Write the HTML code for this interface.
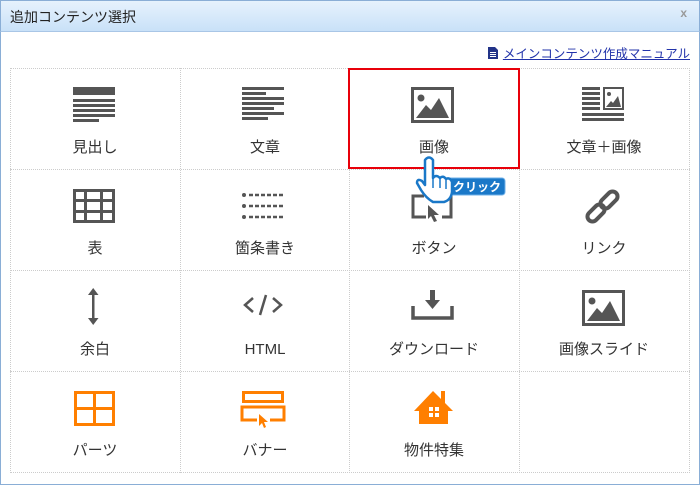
<!DOCTYPE html>
<html><head><meta charset="utf-8"><style>
*{margin:0;padding:0;box-sizing:border-box}
html,body{width:700px;height:485px;overflow:hidden;background:#fff;font-family:"Liberation Sans","Noto Sans CJK JP",sans-serif}
.frame{position:absolute;left:0;top:0;width:700px;height:485px;border:1px solid #8aaed6;border-top:none}
.title{position:absolute;left:0;top:0;width:700px;height:32px;background:linear-gradient(#e6f2fd,#c9e1f8);border:1px solid #8aaed6;border-bottom:1px solid #a9c6e6}
.title span{position:absolute;left:9px;top:6px;font-size:14px;color:#222}
.title b{position:absolute;right:12px;top:5px;font-size:12px;color:#999;font-weight:bold}
.link{position:absolute;right:10px;top:43px;font-size:12.5px;color:#2233aa;text-decoration:underline}
.lbl{position:absolute;width:170px;text-align:center;font-size:15px;line-height:20px;height:20px;color:#333}
</style></head><body>
<div class="frame"></div>
<div class="title"><span>追加コンテンツ選択</span><b>x</b></div>
<div class="link"><svg width="10" height="12" style="vertical-align:-1px;margin-right:5px"><path d="M0 0H7L10 3V12H0Z" fill="#223388"/><rect x="2" y="5" width="6" height="1" fill="#fff"/><rect x="2" y="7" width="6" height="1" fill="#fff"/><rect x="2" y="9" width="6" height="1" fill="#fff"/></svg>メインコンテンツ作成マニュアル</div>
<div style="position:absolute;left:10px;top:68px;width:680px;height:405px;border-top:1px dotted #ccc;border-left:1px dotted #ccc"></div>
<div style="position:absolute;left:180px;top:68px;height:405px;border-left:1px dotted #ccc"></div>
<div style="position:absolute;left:349px;top:68px;height:405px;border-left:1px dotted #ccc"></div>
<div style="position:absolute;left:519px;top:68px;height:405px;border-left:1px dotted #ccc"></div>
<div style="position:absolute;left:689px;top:68px;height:405px;border-left:1px dotted #ccc"></div>
<div style="position:absolute;left:10px;top:169px;width:680px;border-top:1px dotted #ccc"></div>
<div style="position:absolute;left:10px;top:270px;width:680px;border-top:1px dotted #ccc"></div>
<div style="position:absolute;left:10px;top:371px;width:680px;border-top:1px dotted #ccc"></div>
<div style="position:absolute;left:10px;top:472px;width:680px;border-top:1px dotted #ccc"></div>

<div class="lbl" style="left:10px;top:138px">見出し</div>
<div class="lbl" style="left:180px;top:138px">文章</div>
<div class="lbl" style="left:349px;top:138px">画像</div>
<div class="lbl" style="left:519px;top:138px">文章＋画像</div>
<div class="lbl" style="left:10px;top:239px">表</div>
<div class="lbl" style="left:180px;top:239px">箇条書き</div>
<div class="lbl" style="left:349px;top:239px">ボタン</div>
<div class="lbl" style="left:519px;top:239px">リンク</div>
<div class="lbl" style="left:10px;top:340px">余白</div>
<div class="lbl" style="left:180px;top:340px">HTML</div>
<div class="lbl" style="left:349px;top:340px">ダウンロード</div>
<div class="lbl" style="left:519px;top:340px">画像スライド</div>
<div class="lbl" style="left:10px;top:441px">パーツ</div>
<div class="lbl" style="left:180px;top:441px">バナー</div>
<div class="lbl" style="left:349px;top:441px">物件特集</div>

<div style="position:absolute;left:348px;top:68px;width:172px;height:101px;border:2px solid #e8000a"></div>

<svg width="700" height="485" style="position:absolute;left:0;top:0">
<g fill="#555">
<rect x="73" y="87" width="42" height="8"/><rect x="73" y="99" width="42" height="3"/><rect x="73" y="104" width="42" height="3"/><rect x="73" y="109" width="42" height="3"/><rect x="73" y="114" width="42" height="3"/><rect x="73" y="119" width="26" height="3"/>
<rect x="242" y="87" width="42" height="3"/><rect x="242" y="92" width="24" height="3"/><rect x="242" y="97" width="42" height="3"/><rect x="242" y="102" width="42" height="3"/><rect x="242" y="107" width="32" height="3"/><rect x="242" y="112" width="42" height="3"/><rect x="242" y="117" width="26" height="3"/>
<rect x="412.5" y="88.5" width="40" height="33" fill="none" stroke="#555" stroke-width="3"/><circle cx="421" cy="98" r="3.5"/><path d="M416 118L426 105L431 110L439 98L449 118Z"/>
<rect x="582" y="87" width="18" height="3"/><rect x="582" y="92" width="18" height="3"/><rect x="582" y="97" width="18" height="3"/><rect x="582" y="102" width="18" height="3"/><rect x="582" y="107" width="18" height="3"/>
<rect x="604" y="88" width="19" height="21" fill="none" stroke="#555" stroke-width="2"/><circle cx="609" cy="94" r="2"/><path d="M606 107L611 101L613 103L618 96L621 107Z"/>
<rect x="582" y="113" width="42" height="3"/><rect x="582" y="118" width="42" height="3"/>
<path d="M73 189H115V223H73Z M76 192V199H84V192Z M87 192V199H100V192Z M103 192V199H112V192Z M76 202V210H84V202Z M87 202V210H100V202Z M103 202V210H112V202Z M76 213V220H84V213Z M87 213V220H100V213Z M103 213V220H112V213Z" fill-rule="evenodd"/>
<g><circle cx="244" cy="195" r="2"/><circle cx="244" cy="206" r="2"/><circle cx="244" cy="217" r="2"/></g>
<g stroke="#555" stroke-width="2.5" stroke-dasharray="4 2"><line x1="249" y1="195" x2="285" y2="195"/><line x1="249" y1="206" x2="285" y2="206"/><line x1="249" y1="217" x2="285" y2="217"/></g>
<path d="M424 196H413V217H426 M440 196H451V217H442" fill="none" stroke="#555" stroke-width="3"/>
<path d="M428 205L428 219L431 216L434 222L437 221L434 215L439 215Z"/>
<g fill="none" stroke="#555" stroke-width="4"><rect x="586" y="208" width="20" height="10" rx="5" transform="rotate(-45 596 213)"/><rect x="599" y="195" width="20" height="10" rx="5" transform="rotate(-45 609 200)"/></g>
<rect x="92" y="293" width="2.5" height="27"/><path d="M88 295L93.2 288L98.5 295Z M88 318L93.2 325L98.5 318Z"/>
<g fill="none" stroke="#555" stroke-width="2.5"><path d="M253 298L245 305L253 312 M273 298L281 305L273 312 M266 295L260 315"/></g>
<rect x="430" y="290" width="5" height="12"/><path d="M425 300L432.5 309L440 300Z"/><path d="M413 306V318H452V306" fill="none" stroke="#555" stroke-width="3.5"/>
<rect x="583.5" y="291.5" width="40" height="33" fill="none" stroke="#555" stroke-width="3"/><circle cx="592" cy="301" r="3.5"/><path d="M587 321L597 308L602 313L610 301L620 321Z"/>
</g>
<g fill="#ff7f00">
<path d="M74 391H115V426H74Z M77 394V407H93V394Z M96 394V407H112V394Z M77 410V423H93V410Z M96 410V423H112V410Z" fill-rule="evenodd"/>
<path d="M242 391H284V403H242Z M245 394V400H281V394Z" fill-rule="evenodd"/>
<path d="M257 420H242V407H284V420H270" fill="none" stroke="#ff7f00" stroke-width="3"/>
<path d="M259 414L259 426L262 423L264 428L266 427L264 422L268 422Z"/>
<path d="M433 391L414 411H419V424H448V411H453L445 403V391H441V399Z"/>
<rect x="429" y="407" width="4" height="4" fill="#fff"/><rect x="435" y="407" width="4" height="4" fill="#fff"/><rect x="429" y="413" width="4" height="4" fill="#fff"/><rect x="435" y="413" width="4" height="4" fill="#fff"/>
</g>
<rect x="447" y="178" width="58" height="17" rx="3" fill="#1a78c8" stroke="#6fb0e8" stroke-width="1"/>
<text x="453" y="191" font-size="12" font-weight="bold" fill="#fff" font-family="Liberation Sans,Noto Sans CJK JP,sans-serif">クリック</text>
<path d="M425 160Q429 155 433 160V178Q436 174 440 178Q443 175 446 179Q450 177 452 182V192Q451 200 444 202H433Q426 198 421 190L417 183Q417 178 422 181L425 185Z" fill="#fff" stroke="#1a78c8" stroke-width="2.5" stroke-linejoin="round"/>
<path d="M433 178V188M440 178V188M446 180V189" stroke="#1a78c8" stroke-width="1.5"/>
</svg>
</body></html>
